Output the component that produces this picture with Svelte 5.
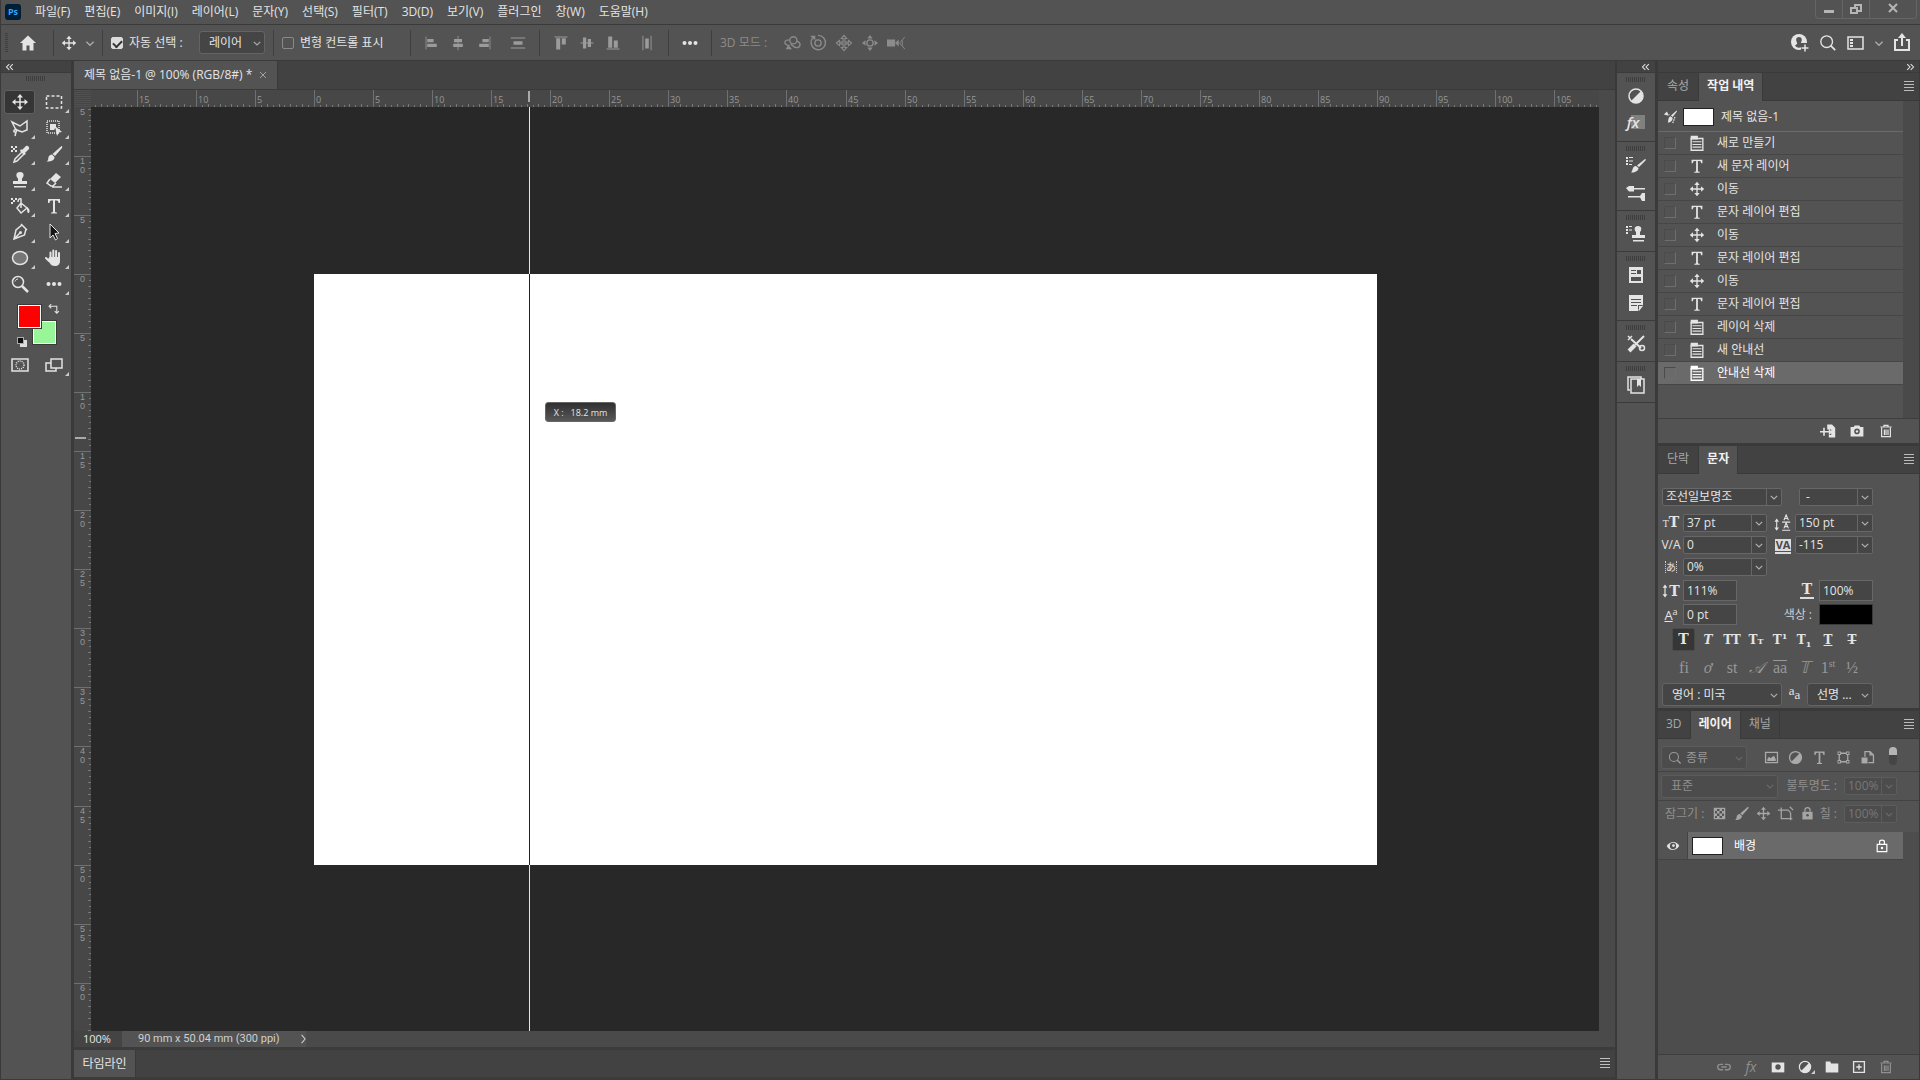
<script lang="ts">
	const menus = ['파일(F)', '편집(E)', '이미지(I)', '레이어(L)', '문자(Y)', '선택(S)', '필터(T)', '3D(D)', '보기(V)', '플러그인', '창(W)', '도움말(H)'];

	// every glyph is drawn on a 20x20 grid
	const line = 'fill="none" stroke="currentColor" stroke-width="1.5"';
	const thin = 'fill="none" stroke="currentColor" stroke-width="1"';

	const icons: Record<string, string> = {
		home: '<path d="M10 2.500L2 10h2.500v7.500h4v-5h3v5h4V10H18z"/>',
		move: `<path ${line} d="M10 4v12M4 10h12"/><path d="M10 2l3 3.500H7zM10 18l3-3.500H7zM2 10l3.500-3v6zM18 10l-3.500-3v6z"/>`,
		chevron: `<path ${line} d="M6 8.500l4 4 4-4"/>`,
		collapse: `<path ${line} d="M9 6l-4 4 4 4M14 6l-4 4 4 4"/>`,
		expand: `<path ${line} d="M6 6l4 4-4 4M11 6l4 4-4 4"/>`,
		close: `<path ${line} d="M5 5l10 10M15 5L5 15"/>`,
		next: `<path ${line} d="M8 4l5 6-5 6"/>`,
		alignLeft: `<path d="M2 2h1v16H2zM4 5h8v4H4zM4 11h12v4H4z"/>`,
		alignCenter: '<path d="M9.500 1h1v18h-1zM5 5h10v4H5zM4 11h12v4H4z"/>',
		alignRight: '<path d="M17 2h1v16h-1zM8 5h8v4H8zM4 11h12v4H4z"/>',
		distribute: '<path d="M2 4h16v1H2zM2 15h16v1H2zM5 8h10v4H5z"/>',
		alignTop: '<path d="M2 2h16v1H2zM4 4h5v14H4zM11 4h5v8h-5z"/>',
		alignMiddle: '<path d="M2 9.500h16v1H2zM5 3h4v14H5zM11 5h4v10h-4z"/>',
		alignBottom: '<path d="M2 17h16v1H2zM4 2h5v14H4zM11 7h5v9h-5z"/>',
		spread: '<path d="M5 2h1v16H5zM14 2h1v16h-1zM8 5h4v11H8z"/>',
		dots: '<circle cx="4.500" cy="10" r="2"/><circle cx="10" cy="10" r="2"/><circle cx="15.500" cy="10" r="2"/>',
		orbit: `<circle ${line} cx="11.500" cy="7" r="4"/><path ${line} d="M7.500 6.500C1 6.500 1 10 4 12l3 1M15.500 8c5 2 4 6 1 7-4 1-5-1-8-4"/><path d="M3 17l3-5 4 5z"/>`,
		roll: `<circle ${line} cx="10" cy="10" r="3.500"/><path ${line} d="M4.500 4a8 8 0 1 0 5.500-2.500"/><path d="M1 2h6v5z"/>`,
		pan: `<path fill="none" stroke="currentColor" stroke-width="1.200" d="M10 1.500L7 5h2v4H5V7l-3.500 3L5 13v-2h4v4H7l3 3.500 3-3.500h-2v-4h4v2l3.500-3L15 7v2h-4V5h2z"/>`,
		slide: `<circle ${line} cx="10" cy="10" r="3.500"/><path d="M10 1l3 4H7zM10 19l3-4H7zM1 10l4-3v6zM19 10l-4-3v6z"/>`,
		camera3d: `<path d="M0 6h9v8H0zM9 10l4-4v8z"/><path ${thin} d="M20 3l-6 7 6 7M17 7v6"/>`,
		user: `<circle cx="9" cy="9" r="8"/><path d="M9 4c-3 0-3.500 3-2 5.500.5 1.500-.5 2-2 3 2 3 6 3 8 0-1.500-1-2.500-1.500-2-3C12.500 7 12 4 9 4z" fill="#535353"/><path d="M11 10h9v9h-9z" fill="#535353"/><path ${line} d="M15 11.500v7M11.500 15h7"/>`,
		search: `<circle ${line} cx="8.500" cy="8.500" r="6.500"/><path fill="none" stroke="currentColor" stroke-width="2" d="M13 13l5 5"/>`,
		workspace: `<rect ${line} x="2" y="4" width="15" height="12"/><path d="M4 6h3v2H4zM4 9h3v2H4zM4 12h3v2H4z"/>`,
		share: `<path fill="none" stroke="currentColor" stroke-width="2" d="M6 7H3v10h14V7h-3M10 13V3"/><path d="M10 0l4 5H6z"/>`,
		marquee: `<rect ${line} x="2.500" y="4" width="15" height="12" stroke-dasharray="3 2"/>`,
		lasso: `<path ${line} d="M6 12L2 4l8 4 7-5v9l-5 2-5-2c-4-1-4 3-1 2 1-1 1-2 0-3M6 14l-1 4"/>`,
		objectSelect: `<rect ${line} x="3" y="3" width="12" height="12" stroke-dasharray="1 1"/><path d="M6 6h6v3l-2 3H6zM11 8l7 6-3 .5-2 3.500z"/>`,
		dropper: `<path d="M1 2h2v2h2v2H3v2H1V6h2V4H1zM5 2h2v2H5zM5 6h2v2H5zM12 6l4-4c1-1 4 1 3 3l-4 4 1 1-2 1-4-4 1-2z"/><path ${line} d="M12 8l-7 7-1 3 3-1 7-7"/>`,
		brush: '<path d="M17.500 2c1 0 1 1 .5 2L11 12l-2.500-2zM8 10.500l2.500 2.500c0 4-5 5-8 4.500 2-1 1.500-2.500 2-4.500.5-1.500 2-2.500 3.500-2.500z"/>',
		stamp: '<path d="M10 2c5 0 4 5 2 6.500V11h5v3H3v-3h5V8.500C6 7 5 2 10 2zM4 16h12v1.500H4z"/>',
		eraser: `<path d="M12 3l5 4-6 6-5-4z"/><path ${line} d="M6 9l-3 4 4 3h2l3-3M8 17h10"/>`,
		bucket: `<path d="M1 2h2v2h2v2H3v2H1V6h2V4H1zM5 2h2v2H5z"/><path ${line} d="M11 7l6 5-6 5-4-5zM11 12V3c-2-1-3 1-3 3"/><path d="M17 11c3 2 3 4 2 6-2 0-2-2-2-6z"/>`,
		type: '<path d="M4 3h12v4h-1.500c0-1.500-.5-2.500-2-2.500h-1.500V15c0 1 .5 1.500 2 1.500V17.500H7V16.500c1.500 0 2-.5 2-1.500V4.500H7.500c-1.500 0-2 1-2 2.500H4z"/>',
		pen: `<path ${line} d="M12 3l4 4-1.500 6L4 17 6 8zM4 17l6-6M11 2l6 6"/><circle cx="10.500" cy="10.500" r="1.500"/>`,
		pointer: `<path d="M6 2l9 9-4 .5 2.500 5-2 1.500L9 13l-3 3z" fill="#151515" stroke="currentColor"/>`,
		ellipse: `<ellipse cx="10" cy="10" rx="7.500" ry="6.500" fill="#777" stroke="currentColor" stroke-width="1.500"/>`,
		hand: `<path fill="none" stroke="currentColor" stroke-width="2" stroke-linecap="round" d="M6.500 10V4.500M9.300 9V2.500M12.100 9V3M15 10V5M5 13l-3-3"/><path d="M5.500 9H16v4c0 3-2 5-5 5s-4-1-6-4l-1-3z"/>`,
		zoom: `<circle ${line} cx="8" cy="8" r="5.500"/><path fill="none" stroke="currentColor" stroke-width="2.500" d="M12 12l6 6"/><path ${thin} d="M5 7.500C5.500 6 6.500 5 8 5"/>`,
		swap: `<path ${line} d="M4 6h10v9M6 3L3 6l3 3M11 13l3 3 3-3"/>`,
		mask: `<rect ${line} x="2" y="4" width="16" height="12"/><circle ${line} cx="10" cy="10" r="4" stroke-dasharray="1 1"/>`,
		screen: `<path ${line} d="M7 8H2v8h10v-3M7 4h11v9H7z"/>`,
		adjust: `<circle ${line} cx="10" cy="10" r="7"/><path d="M15 5a7 7 0 0 1-10 10z"/>`,
		brushes: `<path d="M0 2h2v2H0zM3 2h4v1H3zM0 5h2v2H0zM3 5.500h4v1H3zM0 8h2v2H0zM3 9h3v1H3zM19 4c1 0 1 1 .5 1.500L13 12l-2-1.500zM10 11l2.500 2c0 3-4 5-7.500 4.500C7 16 6 11 10 11z"/>`,
		brushSettings: `<path d="M0 5l3-2h5v2h11v1.500H8v2H3zM2 13h12l2-3h3v8h-3l-2-3.500H2z"/>`,
		clone: `<path d="M0 2h2v2H0zM3 2h3v1H3zM0 5h2v2H0zM3 5.500h3v1H3zM0 8h2v2H0zM12 2c4 0 4 4 2 6v3h5v3H6v-3h4V8c-2-2-2-6 2-6zM7 16h11v1.500H7z"/>`,
		library: `<path d="M3 2h14v16H3z"/><path fill="#535353" d="M5 5h5v1H5zM5 8h5v1H5zM11 5h4v4h-4zM5 12h10v4H5z"/>`,
		note: `<path d="M3 2h14v10l-5 6H3z"/><path fill="#535353" d="M5 6h10v1H5zM5 9h10v1H5zM5 12h6v1H5zM12 12h5l-5 5z"/><path d="M13 18v-5h4z"/>`,
		tools: `<path fill="none" stroke="currentColor" stroke-width="2" d="M5 5l10 9M18 2l-9 9"/><path fill="none" stroke="currentColor" stroke-width="4" d="M9 11l-6 6"/><path ${line} d="M2 2l2 2-2 2M6 2L4 4"/><circle ${line} cx="16" cy="14" r="2.500"/>`,
		book: `<path ${line} d="M5 4h13v14H5zM4 15H2V2h13v2"/><path d="M11 4h4v8l-2-2-2 2z"/>`,
		history: `<path d="M17 2c1 1 0 2-1 3l-4 5-2-2zM9 9l3 2c0 4-3 6-6 6 1-2 0-6 3-8zM1 7l4-4 2 5z"/><path ${line} d="M4 7h4M15 10l-3 8" stroke-dasharray="2 1"/>`,
		doc: `<path ${line} d="M3.500 5h13v13h-13z"/><path d="M3 2h8v4H3zM5 8h10v1.300H5zM5 11h10v1.300H5zM5 14h10v1.300H5z"/>`,
		newDoc: '<path d="M9 2h6l4 4v12h-8v-3h3V8H9zM4 6h2v4h5V7l4 4.500-4 4V12H6v4H4v-4H0v-2h4z"/>',
		camera: `<path d="M2 5h4l1-2h6l1 2h4v12H2z"/><circle cx="10" cy="10.500" r="3.500" fill="#535353"/><circle cx="10" cy="10.500" r="1.500"/>`,
		trash: `<path ${line} d="M3 5h14M7.500 5V3h5v2M4.500 6v11h11V6M8 8v7M10 8v7M12.500 8v7"/>`,
		image: `<rect ${line} x="3" y="4" width="14" height="12"/><path d="M5 14v-2l2-3 2 2 2-2 2-1 2 4v2z"/>`,
		shape: `<path ${line} d="M5 5h10v10H5z"/><path d="M3 3h4v4H3zM13 3h4v4h-4zM3 13h4v4H3zM13 13h4v4h-4z"/><path fill="#535353" d="M4 4h2v2H4zM14 4h2v2h-2zM4 14h2v2H4zM14 14h2v2h-2z"/>`,
		smart: `<path ${line} d="M7 9V3h6l4 4v9h-6M13 3v4h4"/><path d="M3 10h7v7H3z"/>`,
		checker: `<rect ${line} x="4" y="4" width="12" height="12"/><path d="M4 4h3v3H4zM10 4h3v3h-3zM7 7h3v3H7zM13 7h3v3h-3zM4 10h3v3H4zM10 10h3v3h-3zM7 13h3v3H7zM13 13h3v3h-3z"/>`,
		crop: `<path ${line} d="M1 6h10M5 3v13h13M16 9v9M8 6h5l3 3M15 2l4 4"/>`,
		lock: `<path d="M4 8h12v9H4z"/><path ${line} d="M7 8V6c0-4 6-4 6 0v2"/><circle cx="10" cy="12" r="1.500" fill="#535353"/>`,
		lockOutline: `<path ${line} d="M4 8h12v9H4zM7 8V5c0-3 6-3 6 0v3"/><circle cx="10" cy="12.500" r="1.500"/>`,
		eye: `<path d="M3 10c4-6 11-6 14 0-4 6-11 6-14 0z"/><circle cx="10" cy="10" r="3.500" fill="#535353"/><circle cx="10.500" cy="9.500" r="1.500"/>`,
		link: `<path ${line} d="M9 7H6a3 3 0 0 0 0 6h3M11 7h3a3 3 0 0 1 0 6h-3M7 10h6"/>`,
		maskLayer: '<path d="M3 5h14v11H3z"/><circle cx="10" cy="10" r="3" fill="#535353"/>',
		folder: '<path d="M3 4h5l1 2h8v10H3z"/>',
		plus: `<path ${line} d="M4 4h12v12H4zM10 7v6M7 10h6"/>`,
		menu: '<path d="M5 5h10v1H5zM5 8h10v1H5zM5 11h10v1H5zM5 14h10v1H5z" transform="translate(0 -1)"/>',
		leading: `<path ${line} d="M3 8v8M9 9h9M9 18h9M11 7l2.500-6L16 7M12 5h3M11 16l2.500-6L16 16M12 14h3" style="stroke-width:1.200"/><path d="M3 5l2.500 3.500h-5zM3 18.500L5.500 15h-5z"/>`,
		height: `<path ${line} d="M10 5v10"/><path d="M10 2l3 4H7zM10 18l3-4H7z"/>`
	};

	const alignTools = ['alignLeft', 'alignCenter', 'alignRight'];
	const verticalTools = ['alignTop', 'alignMiddle', 'alignBottom'];
	const modes3d = ['orbit', 'roll', 'pan', 'slide', 'camera3d'];
	const tools = [
		'move', 'marquee', 'lasso', 'objectSelect', 'dropper', 'brush', 'stamp', 'eraser',
		'bucket', 'type', 'pen', 'pointer', 'ellipse', 'hand', 'zoom', 'dots'
	];
	const dock = [['adjust', 'fx'], ['brushes', 'brushSettings'], ['clone'], ['library', 'note'], ['tools'], ['book']];

	const history = [
		['doc', '새로 만들기'],
		['type', '새 문자 레이어'],
		['move', '이동'],
		['type', '문자 레이어 편집'],
		['move', '이동'],
		['type', '문자 레이어 편집'],
		['move', '이동'],
		['type', '문자 레이어 편집'],
		['doc', '레이어 삭제'],
		['doc', '새 안내선'],
		['doc', '안내선 삭제']
	];

	// 300 ppi: 90 mm is 1063 px; rulers are measured from the middle of the viewport
	const step = 1063 / 18;
	const range = (from: number, to: number) => Array.from({ length: to - from + 1 }, (_, i) => from + i);
	const across = range(-3, 21).map((n) => ({ at: Math.round(n * step) - 531, label: String(Math.abs(n * 5)) }));
	const down = range(-2, 12).map((n) => ({ at: Math.round(n * step) - 295, label: String(Math.abs(n * 5)) }));
	const ticksAcross = range(-38, 219).map((n) => ({ at: Math.round((n * step) / 10) - 531, long: n % 2 === 0 }));
	const ticksDown = range(-28, 130).map((n) => ({ at: Math.round((n * step) / 10) - 295, long: n % 2 === 0 }));

	let tool = $state('move');
	let current = $state(10);
</script>

{#snippet icon(name: string, size = 20)}
	<svg width={size} height={size} viewBox="0 0 20 20" fill="currentColor" aria-hidden="true">{@html icons[name]}</svg>
{/snippet}

{#snippet field(label: string, value: string, cls: string)}
	<span class="field {cls}">
		<input type="text" aria-label={label} {value} />
		<button aria-label="{label} 목록">{@render icon('chevron', 16)}</button>
	</span>
{/snippet}

{#snippet drop(label: string, value: string, cls: string)}
	<span class="drop {cls}">
		<select aria-label={label}><option>{value}</option></select>
		{@render icon('chevron', 16)}
	</span>
{/snippet}

<div class="app">
	<header class="titlebar">
		<span class="logo">Ps</span>
		<nav>
			{#each menus as menu}
				<button>{menu}</button>
			{/each}
		</nav>
		<div class="window">
			<button aria-label="최소화"><svg width="20" height="20"><path d="M5 11h10v3H5z" fill="#b5b5b5" /></svg></button>
			<button aria-label="복원"><svg width="20" height="20" fill="none" stroke="#b5b5b5" stroke-width="2"><path d="M9 9V6h6v6h-3M5 9h6v5H5z" /></svg></button>
			<button class="close" aria-label="닫기"><svg width="20" height="20" stroke="#b5b5b5" stroke-width="2"><path d="M6 5l8 8M14 5l-8 8" /></svg></button>
		</div>
	</header>

	<div class="options">
		<span class="grip-v"></span>
		<button class="home" aria-label="홈">{@render icon('home')}</button>
		<i class="sep"></i>
		<button class="current" aria-label="이동 도구">{@render icon('move', 18)}</button>
		<button class="preset" aria-label="사전 설정">{@render icon('chevron', 18)}</button>
		<i class="sep"></i>
		<label class="auto"><input type="checkbox" checked />자동 선택 :</label>
		{@render drop('자동 선택', '레이어', 'target')}
		<i class="sep"></i>
		<label class="transform"><input type="checkbox" />변형 컨트롤 표시</label>
		<i class="sep"></i>
		{#each alignTools as name}<button class="tool-icon dim" aria-label={name}>{@render icon(name, 16)}</button>{/each}
		<button class="tool-icon dim apart" aria-label="distribute">{@render icon('distribute', 18)}</button>
		<i class="sep"></i>
		{#each verticalTools as name}<button class="tool-icon dim" aria-label={name}>{@render icon(name, 16)}</button>{/each}
		<button class="tool-icon dim apart" aria-label="spread">{@render icon('spread', 18)}</button>
		<i class="sep"></i>
		<button class="tool-icon" aria-label="more">{@render icon('dots')}</button>
		<i class="sep"></i>
		<span class="mode">3D 모드 :</span>
		{#each modes3d as name}<button class="tool-icon mode-icon" aria-label={name}>{@render icon(name, 18)}</button>{/each}
		<div class="account">
			<button aria-label="user">{@render icon('user')}</button>
			<button aria-label="search">{@render icon('search', 18)}</button>
			<button aria-label="workspace">{@render icon('workspace')}</button>
			<button class="small" aria-label="list">{@render icon('chevron', 18)}</button>
			<button aria-label="share">{@render icon('share')}</button>
		</div>
	</div>

	<main>
		<aside class="tools">
			<div class="collapse">{@render icon('collapse', 14)}</div>
			<div class="grip"></div>
			<div class="tool-grid">
				{#each tools as name}
					<button class:active={tool === name} class:more={name !== 'move' && name !== 'zoom'} aria-label={name} onclick={() => (tool = name)}>
						{@render icon(name)}
					</button>
				{/each}
			</div>
			<div class="colors">
				<button class="swatch back" aria-label="배경색"></button>
				<button class="swatch front" aria-label="전경색"></button>
				<span class="swap">{@render icon('swap', 14)}</span>
				<span class="reset"></span>
			</div>
			<div class="tool-grid">
				<button aria-label="mask">{@render icon('mask')}</button>
				<button class="more" aria-label="screen">{@render icon('screen')}</button>
			</div>
		</aside>

		<section class="document">
			<div class="doc-tabs">
				<button class="doc-tab">제목 없음-1 @ 100% (RGB/8#) * {@render icon('close', 12)}</button>
			</div>
			<div class="workspace">
				<div class="corner"></div>
				<svg class="ruler-x">
					<svg x="50%" overflow="visible">
						{#each ticksAcross as t}
							<rect x={t.at} y={t.long ? 14 : 15} width="1" height="3" fill="#777" />
						{/each}
						{#each across as m}
							<rect x={m.at} y="0" width="1" height="17" fill="#707070" />
							<text x={m.at + 2} y="13">{m.label}</text>
						{/each}
						<rect x="-317" y="1" width="2" height="11" fill="#aaa" />
					</svg>
				</svg>
				<div class="gutter"></div>
				<svg class="ruler-y">
					<svg y="50%" overflow="visible">
						{#each ticksDown as t}
							<rect x={t.long ? 14 : 15} y={t.at} width="3" height="1" fill="#777" />
						{/each}
						<text x="6" y="-454">5</text>
						{#each down as m}
							<rect x="0" y={m.at} width="17" height="1" fill="#707070" />
							{#each m.label as digit, i}
								<text x="6" y={m.at + 8 + i * 9}>{digit}</text>
							{/each}
						{/each}
						<rect x="1" y="-132" width="11" height="2" fill="#aaa" />
					</svg>
				</svg>
				<div class="viewport">
					<div class="guide"></div>
					<div class="page"></div>
					<div class="tip">X :&nbsp;&nbsp; 18.2 mm</div>
				</div>
			</div>
			<div class="status">
				<span class="percent">100%</span>
				<button>90 mm x 50.04 mm (300 ppi) {@render icon('next', 14)}</button>
			</div>
			<div class="timeline">
				<button>타임라인</button>
				{@render icon('menu')}
			</div>
		</section>

		<aside class="dock">
			<div class="collapse end">{@render icon('collapse', 14)}</div>
			{#each dock as group}
				<div class="group">
					<div class="grip"></div>
					{#each group as name}
						<button aria-label={name}>
							{#if name === 'fx'}
								<span class="fx-icon">fx</span>
							{:else}
								{@render icon(name)}
							{/if}
						</button>
					{/each}
				</div>
			{/each}
		</aside>

		<aside class="panels">
			<div class="collapse end">{@render icon('expand', 14)}</div>

			<section class="panel">
				<div class="tabs">
					<button>속성</button>
					<button class="active">작업 내역</button>
					{@render icon('menu')}
				</div>
				<div class="history">
					<div class="snapshot">
						{@render icon('history', 16)}
						<span class="thumb"></span>
						<span>제목 없음-1</span>
					</div>
					<ul>
						{#each history as [kind, name], i}
							<li class:selected={current === i}>
								<input type="checkbox" aria-label={name} />
								{@render icon(kind, 18)}
								<button onclick={() => (current = i)}>{name}</button>
							</li>
						{/each}
					</ul>
				</div>
				<div class="foot history-foot">
					<button aria-label="newDoc">{@render icon('newDoc', 16)}</button>
					<button aria-label="camera">{@render icon('camera', 16)}</button>
					<button aria-label="trash">{@render icon('trash', 16)}</button>
				</div>
			</section>

			<section class="panel">
				<div class="tabs">
					<button>단락</button>
					<button class="active">문자</button>
					{@render icon('menu')}
				</div>
				<div class="character">
					<div class="row first">
						{@render field('글꼴', '조선일보명조', 'w120')}
						{@render field('스타일', ' -', 'w74 right')}
					</div>
					<div class="row">
						<span class="sign"><small>T</small><b>T</b></span>
						{@render field('크기', '37 pt', 'w84')}
						<span class="sign second leading">{@render icon('leading', 18)}</span>
						{@render field('행간', '150 pt', 'w78')}
					</div>
					<div class="row">
						<span class="sign va">V/A</span>
						{@render field('커닝', '0', 'w84')}
						<span class="sign second"><span class="boxed">VA</span></span>
						{@render field('자간', '-115', 'w78')}
					</div>
					<div class="row">
						<span class="sign kana"><span>あ</span></span>
						{@render field('비율 간격', '0%', 'w84')}
					</div>
					<div class="row tall">
						<span class="sign scale">{@render icon('height', 16)}<b>T</b></span>
						<input class="plain" type="text" aria-label="세로 비율" value="111%" />
						<span class="sign right under"><b>T</b></span>
						<input class="plain" type="text" aria-label="가로 비율" value="100%" />
					</div>
					<div class="row tall">
						<span class="sign baseline"><u>A</u><sup>a</sup></span>
						<input class="plain" type="text" aria-label="기준선" value="0 pt" />
						<span class="color-label">색상 :</span>
						<button class="black" aria-label="색상"></button>
					</div>
					<div class="faces">
						<button class="on"><b>T</b></button>
						<button><i>T</i></button>
						<button>TT</button>
						<button>T<small>T</small></button>
						<button>T<sup>1</sup></button>
						<button>T<sub>1</sub></button>
						<button><u>T</u></button>
						<button><s>T</s></button>
					</div>
					<div class="faces opentype">
						<button>fi</button>
						<button><i>ơ</i></button>
						<button>st</button>
						<button><i>𝒜</i></button>
						<button><span class="over">aa</span></button>
						<button><i>𝕋</i></button>
						<button>1<sup>st</sup></button>
						<button>½</button>
					</div>
					<div class="row last">
						{@render drop('언어', '영어 : 미국', 'w120')}
						<span class="anti"><sup>a</sup>a</span>
						{@render drop('앤티 앨리어스', '선명 ...', 'w66')}
					</div>
				</div>
			</section>

			<section class="panel layers">
				<div class="tabs">
					<button>3D</button>
					<button class="active">레이어</button>
					<button class="edge">채널</button>
					{@render icon('menu')}
				</div>
				<div class="filter">
					<span class="drop kind">
						<span class="lens">{@render icon('search', 14)}</span>
						<select aria-label="필터"><option>종류</option></select>
						{@render icon('chevron', 16)}
					</span>
					{#each ['image', 'adjust', 'type', 'shape', 'smart'] as name}
						<button aria-label={name}>{@render icon(name, 17)}</button>
					{/each}
					<span class="toggle"></span>
				</div>
				<div class="blend">
					{@render drop('혼합 모드', '표준', 'w117')}
					<span class="lbl">불투명도 :</span>
					{@render field('불투명도', '100%', 'w53')}
				</div>
				<div class="locks">
					<span class="lock-label">잠그기 :</span>
					{#each ['checker', 'brush', 'move', 'crop', 'lock'] as name}
						<button aria-label={name}>{@render icon(name, 17)}</button>
					{/each}
					<span class="lbl">칠 :</span>
					{@render field('칠', '100%', 'w53')}
				</div>
				<div class="layer-list">
					<div class="layer">
						<button class="eye" aria-label="표시">{@render icon('eye', 18)}</button>
						<div class="layer-body">
							<span class="thumb"></span>
							<span>배경</span>
							{@render icon('lockOutline', 16)}
						</div>
					</div>
				</div>
				<div class="foot layer-foot">
					<button class="off" aria-label="link">{@render icon('link', 18)}</button>
					<button class="off fx" aria-label="fx">fx</button>
					<button aria-label="maskLayer">{@render icon('maskLayer', 18)}</button>
					<button class="more" aria-label="adjust">{@render icon('adjust', 16)}</button>
					<button aria-label="folder">{@render icon('folder', 18)}</button>
					<button aria-label="plus">{@render icon('plus', 18)}</button>
					<button class="off" aria-label="trash">{@render icon('trash', 16)}</button>
				</div>
			</section>
		</aside>
	</main>
</div>

<style>
	:global(body) {
		background: #535353;
	}

	.app {
		display: flex;
		flex-direction: column;
		height: 100vh;
		box-sizing: border-box;
		border-left: 1px solid #3a3a3a;
		border-bottom: 1px solid #3a3a3a;
		overflow: hidden;
		background: #535353;
		color: #e4e4e4;
		font: 12px/16px 'Open Sans', 'Noto Sans CJK KR', sans-serif;
	}

	.app * {
		box-sizing: border-box;
	}

	button,
	select,
	input {
		margin: 0;
		padding: 0;
		border: 0;
		background: none;
		color: inherit;
		font: inherit;
	}

	button {
		display: flex;
		align-items: center;
		justify-content: center;
		white-space: nowrap;
	}

	svg {
		display: block;
		flex: none;
	}

	/* top bars */
	.titlebar {
		display: flex;
		flex: none;
		height: 25px;
		padding-left: 4px;
		border-bottom: 1px solid #3a3a3a;
	}

	.logo {
		width: 16px;
		height: 16px;
		margin: 4px 14px 0 0;
		border-radius: 3px;
		background: #001e36;
		color: #31a8ff;
		font-size: 9px;
		font-weight: 700;
		text-align: center;
	}

	nav {
		display: flex;
		gap: 14px;
		height: 24px;
	}

	.window {
		display: flex;
		height: 19px;
		margin: 0 3px 0 auto;
		border: 1px solid #656565;
		border-top: 0;
		border-radius: 0 0 4px 4px;
	}

	.window button {
		width: 27px;
		border-right: 1px solid #656565;
	}

	.window .close {
		width: 46px;
		border-right: 0;
	}

	.options {
		display: flex;
		align-items: center;
		flex: none;
		height: 36px;
		padding-left: 4px;
		border-bottom: 1px solid #3a3a3a;
	}

	.grip-v {
		width: 3px;
		height: 20px;
		background: repeating-linear-gradient(#3e3e3e 0 1px, transparent 1px 2px);
	}

	.sep {
		width: 1px;
		height: 26px;
		margin: 0 8px;
		background: #3e3e3e;
	}

	.home {
		width: 34px;
		margin-left: 3px;
	}

	.current {
		width: 14px;
	}

	.preset {
		width: 8px;
		margin-left: 10px;
		color: #aaa;
	}

	label {
		display: flex;
		align-items: center;
		gap: 6px;
	}

	.auto {
		min-width: 88px;
	}

	.transform {
		min-width: 120px;
	}

	label input {
		appearance: none;
		width: 12px;
		height: 12px;
		border: 1px solid #8a8a8a;
		border-radius: 2px;
	}

	label input:checked {
		border-color: #dcdcdc;
		background: #dcdcdc;
	}

	label input:checked::after {
		content: '';
		display: block;
		width: 7px;
		height: 4px;
		margin: 2px 0 0 1px;
		border: solid #333;
		border-width: 0 0 2px 2px;
		transform: rotate(-45deg);
	}

	.drop {
		position: relative;
		display: flex;
		align-items: center;
		height: 23px;
		border: 1px solid #646464;
		border-radius: 3px;
		background: #454545;
	}

	.drop select {
		appearance: none;
		width: 100%;
		height: 100%;
		padding-left: 9px;
	}

	.drop > svg {
		position: absolute;
		right: -1px;
		color: #aaa;
		pointer-events: none;
	}

	.target {
		width: 66px;
	}

	.tool-icon {
		width: 26px;
	}

	.dim {
		color: #9b9b9b;
	}

	.apart {
		margin-left: 8px;
	}

	.mode,
	.mode-icon {
		color: #8b8b8b;
	}

	.mode {
		width: 59px;
	}

	.account {
		display: flex;
		align-items: center;
		gap: 9px;
		margin: 0 8px 0 auto;
	}

	.account .small {
		width: 8px;
		color: #aaa;
	}

	/* columns */
	main {
		display: flex;
		flex: 1;
		min-height: 0;
	}

	.collapse {
		display: flex;
		align-items: center;
		height: 12px;
		flex: none;
		padding: 0 2px;
		background: #424242;
		border-bottom: 1px solid #3a3a3a;
	}

	.end {
		justify-content: flex-end;
	}

	.grip {
		height: 5px;
		width: 20px;
		margin: 3px auto 9px;
		background: repeating-linear-gradient(90deg, #3e3e3e 0 1px, transparent 1px 2px);
	}

	.tools {
		flex: none;
		width: 73px;
		border-right: 3px solid #3a3a3a;
	}

	.tool-grid {
		display: grid;
		grid-template-columns: 31px 31px;
		grid-auto-rows: 24px;
		gap: 2px 3px;
		padding-left: 3px;
	}

	.tool-grid button {
		border-radius: 3px;
	}

	.tool-grid .active {
		background: #353535;
		border: 1px solid #606060;
	}

	.more {
		position: relative;
	}

	.more::after {
		content: '';
		position: absolute;
		right: 0;
		bottom: 1px;
		border: 2px solid;
		border-color: transparent #ccc #ccc transparent;
	}

	.colors {
		position: relative;
		height: 57px;
	}

	.swatch {
		position: absolute;
		width: 25px;
		height: 25px;
		border: 2px solid #3a3a3a;
		outline: 1px solid #fff;
		outline-offset: -2px;
	}

	.front {
		left: 16px;
		top: 8px;
		background: #f00;
	}

	.back {
		left: 31px;
		top: 24px;
		background: #98f598;
	}

	.swap {
		position: absolute;
		left: 46px;
		top: 6px;
	}

	.reset {
		position: absolute;
		left: 16px;
		top: 41px;
		width: 7px;
		height: 7px;
		background: #111;
		border: 1px solid #aaa;
		box-shadow: 3px 3px 0 #ddd;
	}

	/* document */
	.document {
		display: flex;
		flex-direction: column;
		flex: 1;
		min-width: 0;
		border-right: 1px solid #3a3a3a;
	}

	.doc-tabs {
		display: flex;
		flex: none;
		height: 29px;
		background: #424242;
		border-bottom: 1px solid #3a3a3a;
	}

	.doc-tab {
		gap: 5px;
		padding: 0 8px 0 10px;
		background: #535353;
		border-right: 1px solid #3a3a3a;
	}

	.doc-tab svg {
		color: #aaa;
	}

	.workspace {
		display: grid;
		flex: 1;
		min-height: 0;
		grid-template-columns: 17px 1fr 16px;
		grid-template-rows: 17px 1fr;
		background: #4a4a4a;
	}

	.corner {
		background: repeating-linear-gradient(#505050 0 1px, #464646 1px 2px);
	}

	.ruler-x {
		width: 100%;
		height: 17px;
	}

	.ruler-y {
		width: 17px;
		height: 100%;
	}

	.ruler-x,
	.ruler-y {
		background: #474747;
		overflow: hidden;
		fill: #979797;
		font-size: 9px;
	}

	.gutter {
		grid-row: span 2;
	}

	.ruler-y {
		grid-column: 1;
		grid-row: 2;
		font-family: 'Liberation Sans', sans-serif;
	}

	.viewport {
		position: relative;
		display: flex;
		align-items: center;
		justify-content: center;
		overflow: hidden;
		background: #282828;
	}

	.guide {
		position: absolute;
		left: calc(50% - 316px);
		top: 0;
		bottom: 0;
		width: 1px;
		background: #e4e4e4;
	}

	.page {
		position: relative;
		flex: none;
		width: 1063px;
		height: 591px;
		margin: 1px 0 0 1px;
		background: #fff;
	}

	.page::before {
		content: '';
		position: absolute;
		left: 215px;
		width: 1px;
		height: 100%;
		background: #222;
	}

	.tip {
		position: absolute;
		left: calc(50% - 300px);
		top: calc(50% - 167px);
		width: 71px;
		height: 20px;
		border: 1px solid #666;
		border-radius: 3px;
		background: linear-gradient(#303030, #585858);
		font-size: 9px;
		line-height: 19px;
		text-align: center;
	}

	.status {
		display: flex;
		flex: none;
		height: 19px;
		background: #4a4a4a;
		border-bottom: 3px solid #3c3c3c;
		font-size: 11px;
	}

	.percent {
		width: 48px;
		padding-left: 9px;
		background: #444;
	}

	.status button {
		gap: 16px;
		padding: 0 0 0 16px;
		width: 184px;
		justify-content: flex-start;
		background: #535353;
		color: #d0d0d0;
		font-family: Roboto, sans-serif;
	}

	.timeline {
		display: flex;
		align-items: center;
		justify-content: space-between;
		flex: none;
		height: 29px;
		background: #424242;
		border-bottom: 2px solid #3c3c3c;
		color: #c0c0c0;
	}

	.timeline button {
		height: 100%;
		width: 62px;
		background: #535353;
		border-right: 1px solid #3a3a3a;
		color: #e4e4e4;
	}

	/* icon dock */
	.dock {
		flex: none;
		width: 41px;
		border: solid #3a3a3a;
		border-width: 0 2px 0 1px;
	}

	.group {
		padding: 1px 0 3px;
		border-bottom: 1px solid #3a3a3a;
	}

	.group .grip {
		margin-bottom: 0;
	}

	.group button {
		width: 100%;
		height: 28px;
	}

	.fx-icon {
		padding: 0 6px 4px 0;
		background: linear-gradient(#808080, #808080) 100% 0 / 14px 14px no-repeat;
		font: italic 600 15px/14px 'Open Sans', sans-serif;
	}

	/* panels */
	.panels {
		display: flex;
		flex-direction: column;
		flex: none;
		width: 263px;
		border: solid #3a3a3a;
		border-width: 0 1px;
	}

	.panel {
		border-bottom: 3px solid #3a3a3a;
	}

	.tabs {
		display: flex;
		height: 28px;
		background: #424242;
		align-items: center;
		border-bottom: 1px solid #3a3a3a;
	}

	.tabs button {
		height: 28px;
		padding: 0 9px 1px;
		color: #a8a8a8;
	}

	.tabs .active {
		padding: 0 8px 1px;
		background: #535353;
		border: solid #3a3a3a;
		border-width: 0 1px;
		color: #f2f2f2;
		font-weight: 700;
	}

	.layers .tabs button {
		padding: 0 8px 1px;
	}

	.tabs .edge {
		border-right: 1px solid #3a3a3a;
	}

	.tabs > svg {
		margin-left: auto;
		color: #bbb;
	}

	.history {
		height: 318px;
		background: linear-gradient(90deg, transparent calc(100% - 16px), #4a4a4a 0);
		border-bottom: 1px solid #3e3e3e;
	}

	.snapshot {
		display: flex;
		align-items: center;
		height: 31px;
		margin-right: 16px;
		padding: 2px 0 0 5px;
		border-bottom: 1px solid #6a6a6a;
	}

	.thumb {
		width: 31px;
		height: 18px;
		margin: 0 7px 0 4px;
		background: #fff;
		border: 1px solid #222;
	}

	ul {
		margin: 0 16px 0 0;
		padding: 0;
		list-style: none;
	}

	li {
		display: flex;
		align-items: center;
		height: 23px;
		padding-left: 6px;
		border-bottom: 1px solid #464646;
	}

	li input {
		appearance: none;
		width: 12px;
		height: 12px;
		margin-right: 12px;
		border: 1px solid #4b4b4b;
		border-right-color: #6e6e6e;
		border-bottom-color: #6e6e6e;
	}

	li button {
		margin-left: 11px;
	}

	li.selected {
		background: #6a6a6a;
		color: #fff;
	}

	.foot {
		display: flex;
		align-items: center;
		justify-content: flex-end;
		height: 24px;
	}

	.history-foot {
		gap: 13px;
		padding-right: 25px;
	}

	.character {
		display: flex;
		flex-direction: column;
		height: 234px;
		padding: 14px 46px 0 4px;
	}

	.row {
		display: flex;
		align-items: center;
		height: 18px;
		margin-bottom: 4px;
	}

	.row.first {
		margin-bottom: 8px;
	}

	.row.tall {
		height: 21px;
		margin-bottom: 3px;
	}

	.row.last {
		height: 23px;
		margin-bottom: 0;
	}

	.field {
		display: flex;
		flex: none;
		height: 18px;
		border: 1px solid #676767;
		border-radius: 2px;
		background: #454545;
	}

	.field input {
		flex: 1;
		width: 0;
		min-width: 0;
		padding-left: 3px;
	}

	.field button {
		width: 15px;
		border-left: 1px solid #676767;
		color: #b0b0b0;
	}

	.w120 {
		width: 120px;
	}

	.w117 {
		width: 117px;
	}

	.w84 {
		width: 84px;
	}

	.w78 {
		width: 78px;
	}

	.w74 {
		width: 74px;
	}

	.w66 {
		width: 66px;
	}

	.w53 {
		width: 53px;
	}

	.right {
		margin-left: auto;
	}

	.sign {
		display: flex;
		align-items: baseline;
		justify-content: center;
		flex: none;
		width: 21px;
		padding-right: 3px;
		font: 14px/18px 'DejaVu Serif', serif;
	}

	.sign small {
		font-size: 9px;
	}

	.second {
		margin-left: 7px;
	}

	.scale,
	.leading {
		align-items: center;
	}

	.scale svg {
		margin: 0 -4px 0 -5px;
	}

	.sign.va {
		font: 12px/18px 'Open Sans', sans-serif;
	}

	.boxed {
		background: #dcdcdc;
		color: #484848;
		padding: 0 1px;
		font: 700 11px/12px 'Open Sans', sans-serif;
		border-bottom: 1px solid #535353;
		box-shadow: 0 2px 0 #dcdcdc;
	}

	.kana {
		font: 10px/12px 'Noto Sans CJK JP', sans-serif;
	}

	.kana span {
		border: dotted #ccc;
		border-width: 0 1px;
	}

	.under b {
		padding: 0 2px;
		border-bottom: 2px solid #ddd;
		line-height: 15px;
	}

	.baseline {
		align-items: center;
		font: 13px/18px 'Open Sans', sans-serif;
	}

	.sign sup {
		align-self: flex-start;
		font-size: 9px;
		line-height: 12px;
	}

	.plain {
		width: 54px;
		height: 21px;
		padding-left: 3px;
		border: 1px solid #676767;
		background: #454545;
	}

	.color-label {
		margin: 0 7px 0 auto;
		color: #cfcfcf;
	}

	.black {
		width: 54px;
		height: 21px;
		background: #000;
		border: 1px solid #3a3a3a;
	}

	.faces {
		display: grid;
		grid-template-columns: repeat(8, 24px);
		height: 24px;
		margin: 0 0 0 10px;
	}

	.faces button {
		display: block;
		height: 23px;
		font: 700 12px/20px 'DejaVu Serif', serif;
	}

	.faces small,
	.faces sup,
	.faces sub {
		font-size: 8px;
		line-height: 8px;
	}

	.faces .on {
		width: 23px;
		background: #363636;
		border: 1px solid #4a4a4a;
		border-radius: 2px;
	}

	.faces .on b {
		font-size: 14px;
	}

	.opentype {
		height: 31px;
		align-items: center;
		color: #989898;
	}

	.opentype button {
		font: 16px/20px 'Liberation Serif', serif;
	}

	.opentype sup {
		font-size: 10px;
	}

	.over {
		display: inline-block;
		border-top: 1px solid;
		line-height: 14px;
	}

	.anti {
		width: 25px;
		text-align: center;
		font: 13px/18px 'Liberation Serif', serif;
	}

	.anti sup {
		font-size: 13px;
		line-height: 12px;
		vertical-align: 4px;
	}

	/* layers panel */
	.layers {
		display: flex;
		flex-direction: column;
		flex: 1;
		min-height: 0;
		border-bottom: 0;
	}

	.filter,
	.blend,
	.locks {
		display: flex;
		align-items: center;
		flex: none;
		padding: 0 22px 0 3px;
		border-bottom: 1px solid #434343;
		color: #8f8f8f;
	}

	.filter {
		height: 33px;
		padding-top: 5px;
		color: #aaa;
	}

	.kind {
		width: 86px;
		margin-right: 12px;
		color: #999;
	}

	.kind select {
		padding-left: 4px;
	}

	.layers .drop,
	.layers .field {
		background: #4c4c4c;
		border-color: #5c5c5c;
	}

	.layers .drop > svg,
	.layers .field button {
		color: #6a6a6a;
	}

	.layers .field button {
		border-color: #5c5c5c;
	}

	.layers .field input {
		color: #777;
	}

	.lens {
		padding-left: 6px;
	}

	.filter button {
		width: 24px;
	}

	.toggle {
		width: 8px;
		height: 18px;
		margin: 0 0 4px auto;
		border-radius: 4px;
		background: linear-gradient(#b5b5b5 8px, #454545 8px);
	}

	.blend {
		height: 29px;
	}

	.lbl {
		margin: 0 7px 0 auto;
		white-space: nowrap;
	}

	.locks {
		height: 31px;
		border-bottom: 0;
		padding-bottom: 6px;
	}

	.lock-label {
		width: 47px;
		padding-left: 4px;
		white-space: nowrap;
	}

	.locks > button {
		width: 22px;
		color: #a5a5a5;
	}

	.layer-list {
		flex: 1;
		background: #4d4d4d;
		border-bottom: 1px solid #3e3e3e;
	}

	.layer {
		display: flex;
		height: 28px;
		margin-right: 16px;
		background: #535353;
		border-bottom: 1px solid #444;
	}

	.eye {
		width: 30px;
		border-right: 1px solid #444;
	}

	.layer-body {
		display: flex;
		align-items: center;
		flex: 1;
		background: #6a6a6a;
		color: #fff;
	}

	.layer-body .thumb {
		margin-right: 11px;
	}

	.layer-body svg {
		margin: 0 13px 0 auto;
	}

	.layer-foot {
		gap: 7px;
		padding-right: 23px;
	}

	.layer-foot button {
		width: 20px;
	}

	.layer-foot .off {
		color: #8f8f8f;
	}

	.fx {
		font-style: italic;
		font-size: 14px;
	}
</style>
